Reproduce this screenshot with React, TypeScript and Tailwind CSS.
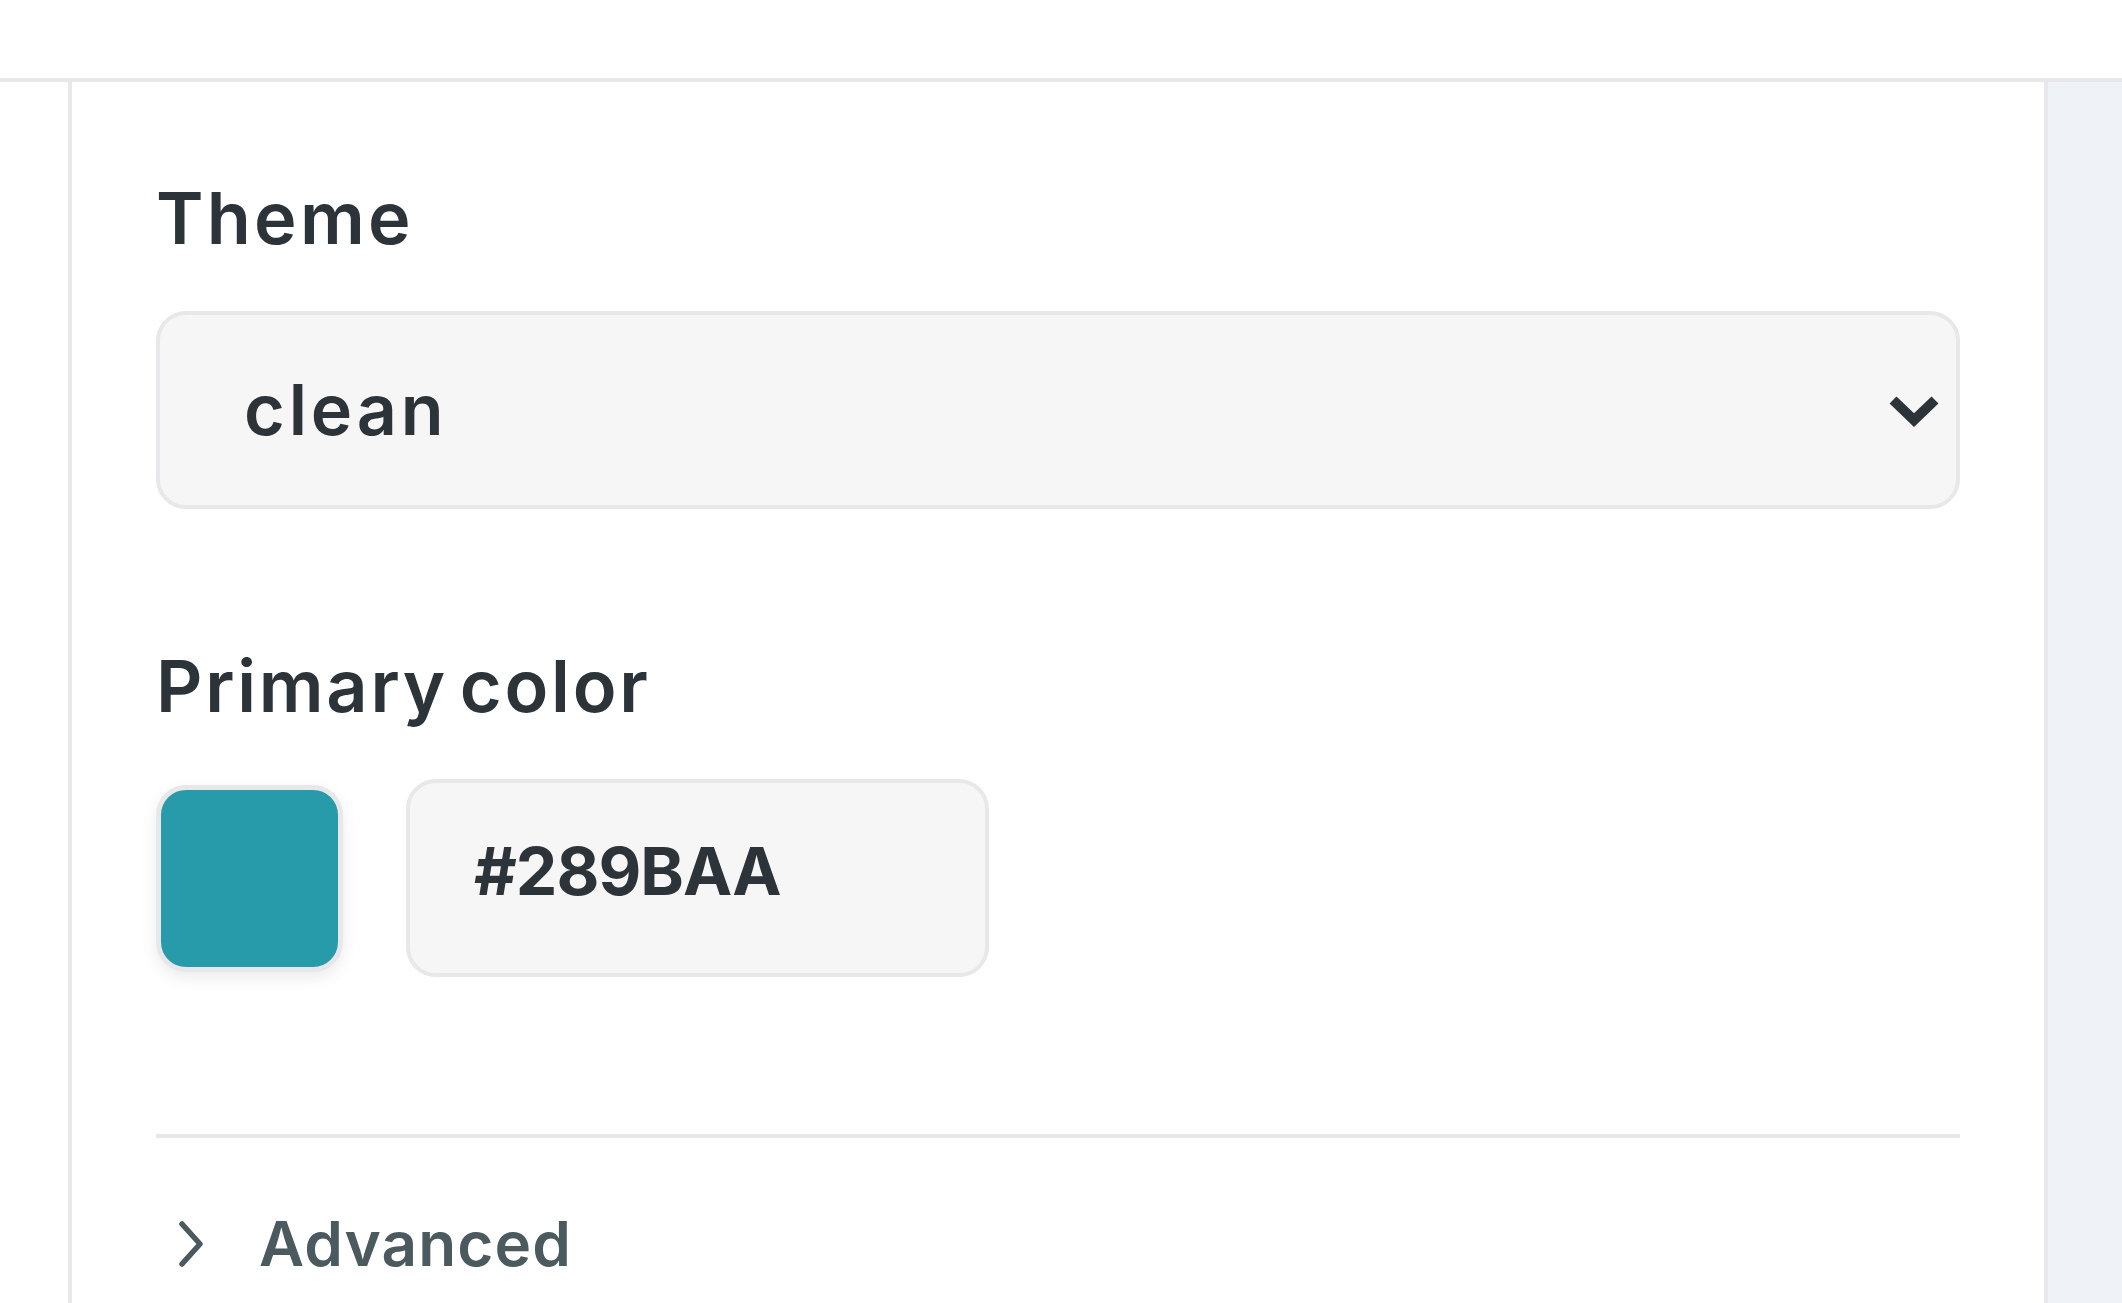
export default function App() {
  return (
    <div className="min-h-screen bg-white font-['Inter',sans-serif] text-[#2d3439]">
      <header className="h-[82px] border-b-4 border-[#e8e8ea] bg-white" />
      <div className="flex h-[1221px]">
        <div className="w-[68px] shrink-0 bg-white" />
        <section className="w-[1980px] shrink-0 border-x-4 border-[#e8e8ea] bg-white px-[84px] pt-[100px]">
          <label className="block text-[72px] leading-none font-semibold tracking-[0.045em]">Theme</label>
          <div className="mt-[57px] flex h-[198px] items-center justify-between rounded-[30px] border-4 border-[#e8e8ea] bg-[#f6f6f6] pr-[16px] pl-[84px]">
            <span className="text-[70px] leading-none font-semibold tracking-[0.055em]">clean</span>
            <svg width="52" height="36" viewBox="0 0 52 36" fill="none" className="mt-[6px] text-[#2d3439]">
              <path d="M5 5 L26 25 L47 5" stroke="currentColor" strokeWidth="10" />
            </svg>
          </div>

          <label className="mt-[141px] block text-[72px] leading-none font-semibold tracking-[0.038em] [word-spacing:-9px]">Primary color</label>
          <div className="mt-[57px] flex items-center gap-[63px]">
            <div className="h-[187px] w-[187px] rounded-[30px] border-[5px] border-[#e8e8ea] bg-[#289BAA] shadow-[0_6px_16px_rgba(0,0,0,0.08)]" />
            <div className="flex h-[198px] w-[583px] items-center rounded-[30px] border-4 border-[#e8e8ea] bg-[#f6f6f6] pb-[14px] pl-[64px]">
              <span className="text-[66px] leading-none font-bold tracking-[-0.015em]">#289BAA</span>
            </div>
          </div>

          <div className="mt-[157px] h-[4px] bg-[#e8e8ea]" />
          <button className="mt-[75px] flex items-center gap-[53px] pl-[22px] text-[#4a5a5f]">
            <svg width="28" height="46" viewBox="0 0 28 46" fill="none">
              <path d="M4 3 L22 23 L4 43" stroke="currentColor" strokeWidth="5.5" strokeLinecap="round" strokeLinejoin="round" />
            </svg>
            <span className="text-[62px] leading-none font-semibold tracking-[0.018em]">Advanced</span>
          </button>
        </section>
        <div className="flex-1 bg-[#eff2f7]" />
      </div>
    </div>
  );
}
